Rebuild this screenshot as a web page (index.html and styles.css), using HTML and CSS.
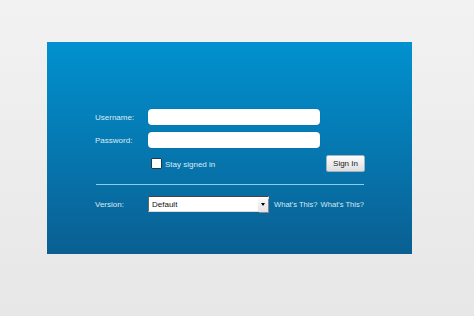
FILE: index.html
```html
<!DOCTYPE html>
<html>
<head>
<meta charset="utf-8">
<link rel="stylesheet" href="styles.css">
</head>
<body>
<div class="page">
  <div class="panel">
    <form class="login">
      <div class="row">
        <label class="label">Username:</label>
        <input class="field" type="text">
      </div>
      <div class="row">
        <label class="label">Password:</label>
        <input class="field" type="password">
      </div>
      <div class="row row-actions">
        <label class="remember"><input class="check" type="checkbox"><span>Stay signed in</span></label>
        <button class="signin" type="button">Sign In</button>
      </div>
      <div class="divider"></div>
      <div class="row">
        <label class="label">Version:</label>
        <div class="select"><span class="select-text">Default</span><span class="select-btn"><span class="arrow"></span></span></div>
        <a class="help">What's This?</a>
        <a class="help">What's This?</a>
      </div>
    </form>
  </div>
</div>
</body>
</html>
```
FILE: styles.css
```css
html, body {
  margin: 0;
  padding: 0;
}
body {
  width: 474px;
  height: 316px;
  overflow: hidden;
  font-family: "Liberation Sans", Arial, sans-serif;
  font-size: 8px;
}
.page {
  height: 316px;
  box-sizing: border-box;
  padding: 42px 0 0 47px;
  background: linear-gradient(#f2f2f2, #e7e7e7);
}
.panel {
  width: 365px;
  height: 212px;
  box-sizing: border-box;
  padding: 67px 0 0 48px;
  background: linear-gradient(#0191cf, #0a5f92);
}
.login {
  width: 270px;
}
.row {
  display: flex;
  align-items: center;
  height: 16px;
  margin-bottom: 7px;
}
.label {
  width: 53px;
  flex: none;
  color: #dcebf6;
  font-size: 8px;
}
.field {
  width: 172px;
  height: 16px;
  box-sizing: border-box;
  border: none;
  border-radius: 4px;
  background: #fff;
  margin: 0;
  padding: 0 4px;
  box-shadow: 0 0 1px rgba(0,0,0,0.2);
}
.row-actions {
  height: 17px;
  margin-bottom: 0;
  padding-left: 56px;
}
.remember {
  display: flex;
  align-items: center;
  color: #dcebf6;
  margin-top: 1px;
}
.check {
  -webkit-appearance: none;
  appearance: none;
  width: 11px;
  height: 11px;
  box-sizing: border-box;
  margin: -2px 3px 0 0;
  border: 1px solid #20384a;
  border-radius: 1px;
  background: #fff;
}
.signin {
  margin-left: auto;
  width: 39px;
  height: 17px;
  padding: 0;
  border: 1px solid #9fb3c3;
  border-radius: 2px;
  background: linear-gradient(#fdfdfd, #dedede);
  color: #222;
  font-family: "Liberation Sans", Arial, sans-serif;
  font-size: 8px;
}
.divider {
  height: 1px;
  margin: 12px 0 11px 1px;
  width: 268px;
  background: #8ccdee;
}
.select {
  flex: none;
  width: 121px;
  height: 16px;
  box-sizing: border-box;
  display: flex;
  align-items: center;
  background: #fff;
  border-top: 1px solid #444;
  border-left: 1px solid #666;
  border-right: 1px solid #ddd;
  border-bottom: 1px solid #ddd;
  color: #111;
}
.select-text {
  flex: 1;
  padding-left: 3px;
}
.select-btn {
  width: 10px;
  height: 14px;
  margin-top: 1px;
  display: flex;
  align-items: center;
  justify-content: center;
  background: linear-gradient(#fafafa, #e4e4e4);
  box-shadow: 1px 1px 0 #888;
}
.arrow {
  width: 0;
  height: 0;
  border-left: 2.5px solid transparent;
  border-right: 2.5px solid transparent;
  border-top: 3px solid #000;
}
.help {
  flex: none;
  margin-left: 5px;
  color: #d4e9f6;
  font-size: 7.6px;
  white-space: nowrap;
  cursor: pointer;
}
.help + .help {
  margin-left: 3px;
}
```
